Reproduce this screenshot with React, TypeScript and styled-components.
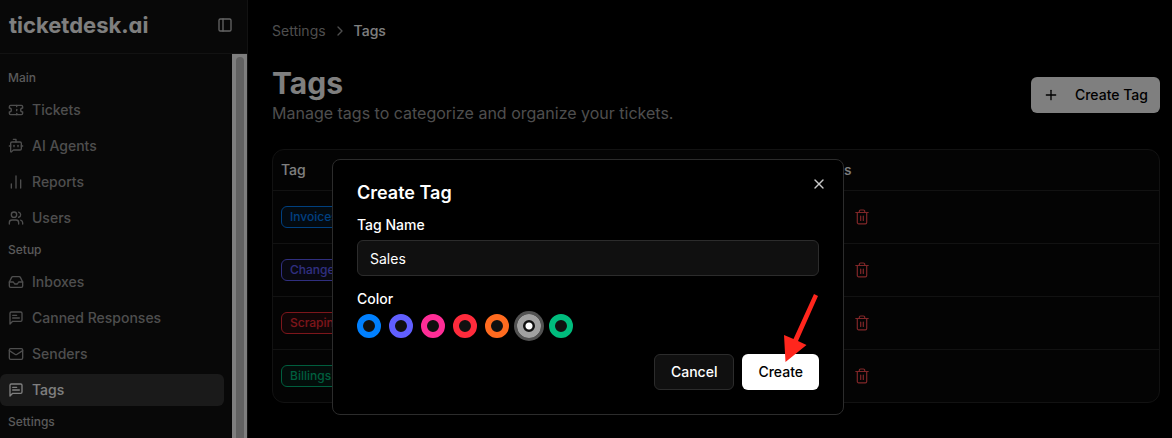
import React, { useState } from "react";
import styled, { createGlobalStyle, css } from "styled-components";
import {
  BotMessageSquare,
  ChartNoAxesColumn,
  ChevronRight,
  Inbox,
  Mail,
  PanelLeft,
  Plus,
  Ticket,
  Users,
  X,
} from "lucide-react";

const GlobalStyle = createGlobalStyle`
  * { box-sizing: border-box; }
  body {
    margin: 0;
    background: #000;
    color: #fff;
    font-family: Inter, "Liberation Sans", sans-serif;
    font-size: 14px;
    line-height: 20px;
    -webkit-font-smoothing: antialiased;
  }
  button, input { font: inherit; color: inherit; }
  h1, h2, p { margin: 0; }
`;

const Page = styled.div`
  display: flex;
  height: 100vh;
  overflow: hidden;
`;

const Sidebar = styled.aside`
  display: flex;
  flex-direction: column;
  flex: 0 0 248px;
  background: #101010;
  border-right: 1px solid #242424;
`;

const SidebarHeader = styled.header`
  display: flex;
  align-items: center;
  justify-content: space-between;
  flex: 0 0 54px;
  padding: 0 14px 4px 9px;
  border-bottom: 1px solid #242424;
`;

const Logo = styled.a`
  color: #fff;
  font-size: 22px;
  font-weight: 700;
  line-height: 28px;
  font-feature-settings: "cv11";
  text-decoration: none;
`;

const IconButton = styled.button<{ $color?: string }>`
  display: grid;
  place-items: center;
  padding: 0;
  border: 0;
  background: none;
  color: ${(p) => p.$color ?? "#c8c8c8"};
  cursor: pointer;
`;

const SidebarBody = styled.div`
  display: flex;
  flex: 1;
  min-height: 0;
`;

const Nav = styled.nav`
  flex: 1;
  padding: 8px 8px 0 0;
  overflow: hidden;
`;

const GroupLabel = styled.div`
  display: flex;
  align-items: center;
  height: 32px;
  padding-left: 8px;
  color: #b4b4b4;
  font-size: 12px;
  font-weight: 500;
  line-height: 16px;
`;

const NavList = styled.ul`
  display: grid;
  gap: 4px;
  margin: 0;
  padding: 0;
  list-style: none;
`;

const NavLink = styled.a<{ $active?: boolean }>`
  display: flex;
  align-items: center;
  gap: 8px;
  height: 32px;
  padding: 0 8px;
  border-radius: 6px;
  color: #9c9c9c;
  font-weight: 500;
  text-decoration: none;
  ${(p) =>
    p.$active &&
    css`
      background: #343434;
      color: #fff;
    `}
`;

const ScrollTrack = styled.div`
  flex: 0 0 15px;
  padding: 3px 3px 0 4px;
  background: #fcfcfc;
`;

const ScrollThumb = styled.div`
  height: 100%;
  border-radius: 4px 4px 0 0;
  background: #c2c2c2;
`;

const Main = styled.main`
  flex: 1;
  min-width: 0;
  padding: 21px 12px 0 24px;
`;

const Breadcrumb = styled.nav`
  display: flex;
  align-items: center;
  gap: 6px;
  height: 20px;
`;

const Crumb = styled.a<{ $current?: boolean }>`
  color: ${(p) => (p.$current ? "#fff" : "#9c9c9c")};
  font-weight: ${(p) => (p.$current ? 500 : 400)};
  text-decoration: none;
`;

const PageHeader = styled.header`
  display: flex;
  align-items: center;
  justify-content: space-between;
  padding-top: 24px;
`;

const PageTitle = styled.h1`
  font-size: 30px;
  font-weight: 700;
  line-height: 36px;
`;

const Subtitle = styled.p`
  color: #9c9c9c;
  font-size: 16px;
  line-height: 24px;
`;

const Button = styled.button<{ $outline?: boolean }>`
  display: inline-flex;
  align-items: center;
  justify-content: center;
  gap: 16px;
  height: 36px;
  padding: 0 16px;
  border: ${(p) => (p.$outline ? "1px solid #2c2c2c" : "0")};
  border-radius: 6px;
  background: ${(p) => (p.$outline ? "#101010" : "#fff")};
  color: ${(p) => (p.$outline ? "#fff" : "#000")};
  font-weight: 500;
  cursor: pointer;
`;

const PageAction = styled(Button)`
  padding: 0 12px;
`;

const TableCard = styled.div`
  margin-top: 24px;
  border: 1px solid #242424;
  border-radius: 12px;
  background: #080808;
  overflow: hidden;
`;

const Table = styled.table`
  width: 100%;
  border-collapse: collapse;
  table-layout: fixed;
`;

const HeadCell = styled.th`
  height: 40px;
  padding: 0 8px;
  border-bottom: 1px solid #242424;
  font-weight: 500;
  text-align: left;
`;

const TagHeadCell = styled(HeadCell)`
  width: 520px;
`;

const Row = styled.tr`
  & + & td {
    border-top: 1px solid #242424;
  }
`;

const Cell = styled.td`
  height: 53px;
  padding: 0 8px;
`;

const ActionCell = styled(Cell)`
  padding-left: 61px;
`;

const Badge = styled.span<{ $color: string }>`
  display: flex;
  align-items: center;
  width: fit-content;
  height: 22px;
  padding: 0 8px;
  border: 1px solid ${(p) => p.$color};
  border-radius: 6px;
  background: ${(p) => p.$color}1a;
  color: ${(p) => p.$color};
  font-size: 12px;
  font-weight: 500;
  line-height: 16px;
`;

const Overlay = styled.div`
  position: fixed;
  inset: 0;
  display: flex;
  align-items: flex-start;
  justify-content: center;
  padding: 159px 0 0 4px;
  background: rgba(0, 0, 0, 0.5);
`;

const Dialog = styled.form`
  position: relative;
  display: grid;
  gap: 16px;
  width: 100%;
  max-width: 512px;
  padding: 24px;
  border: 1px solid #2c2c2c;
  border-radius: 8px;
  background: #000;
`;

const DialogTitle = styled.h2`
  font-size: 18px;
  font-weight: 600;
  line-height: 18px;
`;

const DialogClose = styled(IconButton)`
  position: absolute;
  top: 16px;
  right: 16px;
`;

const Field = styled.div`
  display: grid;
  gap: 8px;
`;

const FieldLabel = styled.label`
  font-weight: 500;
  line-height: 14px;
`;

const TextInput = styled.input`
  width: 100%;
  height: 36px;
  padding: 0 12px;
  border: 1px solid #2c2c2c;
  border-radius: 6px;
  background: #101010;
  outline: none;
`;

const Swatches = styled.div`
  display: flex;
  gap: 8px;
`;

const Swatch = styled.input<{ $color: string }>`
  appearance: none;
  width: 24px;
  height: 24px;
  margin: 0;
  border: 6px solid ${(p) => p.$color};
  border-radius: 50%;
  background: #101010;
  cursor: pointer;
  &:checked {
    background: radial-gradient(circle, #fff 0 3px, #101010 4px);
    box-shadow: 0 0 0 3px #525252;
  }
`;

const DialogFooter = styled.footer`
  display: flex;
  justify-content: flex-end;
  gap: 8px;
`;

const Pointer = styled.svg`
  position: absolute;
  right: 23px;
  bottom: 51px;
  pointer-events: none;
`;

function MessageText() {
  return (
    <svg width="16" height="16" viewBox="0 0 24 24" fill="none" stroke="currentColor" strokeWidth="2" strokeLinecap="round" strokeLinejoin="round">
      <path d="M21 15a2 2 0 0 1-2 2H7l-4 4V5a2 2 0 0 1 2-2h14a2 2 0 0 1 2 2z" />
      <path d="M13 8H7" />
      <path d="M17 12H7" />
    </svg>
  );
}

function TrashIcon() {
  return (
    <svg width="16" height="16" viewBox="0 0 16 16" fill="none" stroke="currentColor" strokeWidth="1.2" strokeLinecap="round" strokeLinejoin="round">
      <path d="M1.8 3.5h12.400M5.300 3.500V2.300a1.300 1.300 0 0 1 1.300-1.300h2.800a1.300 1.300 0 0 1 1.300 1.300v1.200M3.300 3.500v10a1.300 1.300 0 0 0 1.300 1.300h6.800a1.300 1.300 0 0 0 1.300-1.300v-10M6.700 7v4.500M9.300 7v4.500" />
    </svg>
  );
}

const navGroups = [
  {
    label: "Main",
    items: [
      { name: "Tickets", icon: <Ticket size={16} /> },
      { name: "AI Agents", icon: <BotMessageSquare size={16} /> },
      { name: "Reports", icon: <ChartNoAxesColumn size={16} /> },
      { name: "Users", icon: <Users size={16} /> },
    ],
  },
  {
    label: "Setup",
    items: [
      { name: "Inboxes", icon: <Inbox size={16} /> },
      { name: "Canned Responses", icon: <MessageText /> },
      { name: "Senders", icon: <Mail size={16} /> },
      { name: "Tags", icon: <MessageText />, active: true },
    ],
  },
  { label: "Settings", items: [] },
];

const tags = [
  { name: "Invoices", color: "#0080ff" },
  { name: "Changes", color: "#615fff" },
  { name: "Scraping", color: "#fb2c36" },
  { name: "Billings", color: "#00bc7d" },
];

const colors = [
  { name: "Blue", value: "#0080ff" },
  { name: "Indigo", value: "#615fff" },
  { name: "Pink", value: "#ff2d96" },
  { name: "Red", value: "#ff2b3c" },
  { name: "Orange", value: "#ff6b1f" },
  { name: "Gray", value: "#a1a1a1" },
  { name: "Green", value: "#00bc7d" },
];

export default function App() {
  const [name, setName] = useState("Sales");
  const [color, setColor] = useState("Gray");

  return (
    <>
      <GlobalStyle />
      <Page>
        <Sidebar>
          <SidebarHeader>
            <Logo href="#">ticketdesk.ai</Logo>
            <IconButton type="button" aria-label="Toggle sidebar">
              <PanelLeft size={16} />
            </IconButton>
          </SidebarHeader>
          <SidebarBody>
            <Nav>
              {navGroups.map((group) => (
                <section key={group.label}>
                  <GroupLabel>{group.label}</GroupLabel>
                  <NavList>
                    {group.items.map((item) => (
                      <li key={item.name}>
                        <NavLink href="#" $active={"active" in item}>
                          {item.icon}
                          {item.name}
                        </NavLink>
                      </li>
                    ))}
                  </NavList>
                </section>
              ))}
            </Nav>
            <ScrollTrack>
              <ScrollThumb />
            </ScrollTrack>
          </SidebarBody>
        </Sidebar>

        <Main>
          <Breadcrumb aria-label="Breadcrumb">
            <Crumb href="#">Settings</Crumb>
            <ChevronRight size={16} color="#9c9c9c" />
            <Crumb href="#" $current>Tags</Crumb>
          </Breadcrumb>
          <PageHeader>
            <div>
              <PageTitle>Tags</PageTitle>
              <Subtitle>Manage tags to categorize and organize your tickets.</Subtitle>
            </div>
            <PageAction type="button">
              <Plus size={16} />
              Create Tag
            </PageAction>
          </PageHeader>
          <TableCard>
            <Table>
              <thead>
                <tr>
                  <TagHeadCell>Tag</TagHeadCell>
                  <HeadCell>Actions</HeadCell>
                </tr>
              </thead>
              <tbody>
                {tags.map((tag) => (
                  <Row key={tag.name}>
                    <Cell>
                      <Badge $color={tag.color}>{tag.name}</Badge>
                    </Cell>
                    <ActionCell>
                      <IconButton type="button" $color="#ff4d50" aria-label={`Delete ${tag.name}`}>
                        <TrashIcon />
                      </IconButton>
                    </ActionCell>
                  </Row>
                ))}
              </tbody>
            </Table>
          </TableCard>
        </Main>
      </Page>

      <Overlay>
        <Dialog role="dialog" aria-labelledby="dialog-title" onSubmit={(e) => e.preventDefault()}>
          <DialogTitle id="dialog-title">Create Tag</DialogTitle>
          <DialogClose type="button" aria-label="Close">
            <X size={16} />
          </DialogClose>
          <Field>
            <FieldLabel htmlFor="tag-name">Tag Name</FieldLabel>
            <TextInput id="tag-name" value={name} onChange={(e) => setName(e.target.value)} />
          </Field>
          <Field role="radiogroup" aria-labelledby="color-label">
            <FieldLabel as="span" id="color-label">Color</FieldLabel>
            <Swatches>
              {colors.map((c) => (
                <Swatch
                  key={c.name}
                  type="radio"
                  name="color"
                  aria-label={c.name}
                  $color={c.value}
                  checked={color === c.name}
                  onChange={() => setColor(c.name)}
                />
              ))}
            </Swatches>
          </Field>
          <DialogFooter>
            <Button type="button" $outline>Cancel</Button>
            <Button type="submit">Create</Button>
          </DialogFooter>
          <Pointer width="36" height="70" viewBox="0 0 36 70" fill="#ff261d" aria-hidden="true">
            <path d="M30 1L34 3L14 48L22.5 52L1.500 69L0 42L9.500 46Z" />
          </Pointer>
        </Dialog>
      </Overlay>
    </>
  );
}
